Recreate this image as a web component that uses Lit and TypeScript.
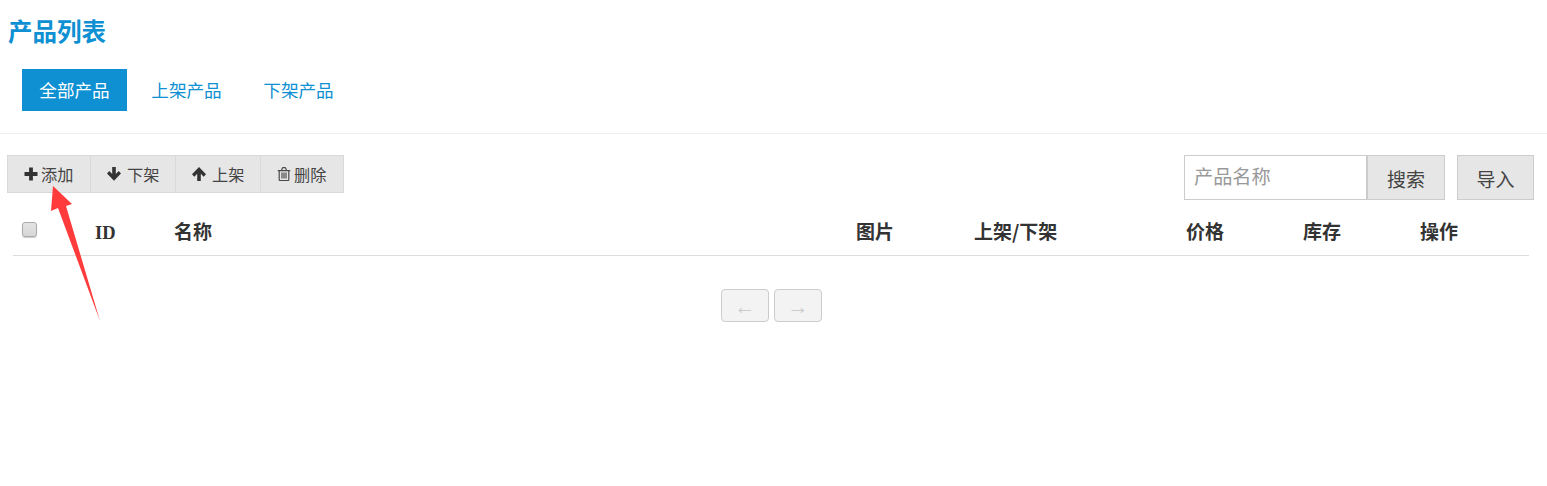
import { LitElement, html, css, svg } from "lit";
import { customElement } from "lit/decorators.js";

const plus = svg`<path d="M5.1 .5h3.8v4.6h4.6v3.8H8.9v4.6H5.1V8.9H.5V5.1h4.6z" fill="currentColor"/>`;
const down = svg`<path d="M5.2 0h3.6v7l2.9-2.9L14 6.5 7 13.8 0 6.5l2.3-2.4L5.2 7z" fill="currentColor"/>`;
const up = svg`<path d="M5.2 14h3.6V6.8l2.9 2.9L14 7.3 7 0 0 7.3l2.3 2.4 2.9-2.9z" fill="currentColor"/>`;
const trash = svg`<path d="M.8 3.6h12.4M2.2 3.6v8.8c0 .8.5 1.2 1.1 1.2h7.4c.6 0 1.1-.4 1.1-1.2V3.6M4.5 3.6l.6-2c.2-.6.6-1 1.2-1h1.4c.6 0 1 .4 1.2 1l.6 2M5 5.6v5.8M7 5.6v5.8M9 5.6v5.8" fill="none" stroke="currentColor" stroke-width="1.2"/>`;

@customElement("app-root")
export class AppRoot extends LitElement {
  static styles = css`
    :host {
      display: block;
      position: relative;
      width: 1547px;
      height: 486px;
      overflow: hidden;
      background: #fff;
      color: #333;
      font-family: "Noto Sans CJK SC", "Liberation Sans", sans-serif;
    }
    .head {
      height: 134px;
      box-sizing: border-box;
      border-bottom: 1px solid #eee;
      padding: 15px 0 0 8px;
    }
    h1 {
      margin: 0;
      height: 32px;
      line-height: 32px;
      font-size: 24.5px;
      font-weight: 700;
      color: #0e90d2;
    }
    .tabs {
      display: flex;
      gap: 7px;
      margin: 22px 0 0 14px;
    }
    .tab {
      width: 105px;
      height: 42px;
      line-height: 41px;
      text-align: center;
      font-size: 17.6px;
      color: #0e90d2;
    }
    .tab.on {
      background: #0e90d2;
      color: #fff;
    }
    .bar {
      display: flex;
      justify-content: space-between;
      align-items: flex-start;
      margin-top: 21px;
      padding: 0 13px 0 7px;
    }
    .group {
      display: flex;
      height: 38px;
      box-sizing: border-box;
      border: 1px solid #d9d9d9;
      background: #e6e6e6;
    }
    .tool {
      box-sizing: border-box;
      display: flex;
      align-items: center;
      padding-left: 16px;
      width: 85px;
      height: 36px;
      border-left: 1px solid #d9d9d9;
      font-size: 16.2px;
      color: #444;
    }
    .tool.first {
      width: 82px;
      border-left: 0;
    }
    .tool.last {
      width: 83px;
    }
    .tool svg {
      flex: none;
      width: 14px;
      height: 14px;
      margin-right: 3px;
      color: #333;
    }
    .tool svg.arr {
      margin-right: 6px;
    }
    .tool svg.t {
      color: #4a4a4a;
    }
    .right {
      display: flex;
    }
    .input {
      box-sizing: border-box;
      width: 183px;
      height: 45px;
      border: 1px solid #ccc;
      padding: 0 9px;
      line-height: 40px;
      font-size: 19.2px;
      color: #999;
    }
    .btn {
      box-sizing: border-box;
      height: 45px;
      border: 1px solid #ccc;
      background: #e6e6e6;
      text-align: center;
      line-height: 45px;
      font-size: 19px;
      color: #444;
    }
    .search {
      width: 78px;
    }
    .import {
      width: 77px;
      margin-left: 12px;
    }
    .thead {
      display: grid;
      grid-template-columns: 82px 79px 682px 118px 212px 117px 117px 1fr;
      align-items: baseline;
      margin: 9px 18px 0 13px;
      height: 47px;
      box-sizing: border-box;
      border-bottom: 1px solid #ddd;
      padding-top: 8px;
      line-height: 28px;
      font-size: 19px;
      font-weight: 700;
      color: #333;
    }
    .thead .id {
      font-family: "Liberation Serif", serif;
      font-size: 18.5px;
    }
    .check {
      box-sizing: border-box;
      align-self: start;
      width: 15px;
      height: 15px;
      margin: 5px 0 0 9px;
      border: 1px solid #aaa;
      border-radius: 3px;
      background: linear-gradient(#e4e4e4, #d6d6d6);
      box-shadow: 0 1px 1px #ccc;
    }
    .pager {
      display: flex;
      justify-content: center;
      gap: 5px;
      margin-top: 33px;
      padding-right: 4px;
    }
    .pg {
      box-sizing: border-box;
      width: 48px;
      height: 33px;
      border: 1px solid #ccc;
      border-radius: 4px;
      background: #f3f3f3;
      color: #ccc;
      text-align: center;
      font-size: 21px;
      line-height: 33px;
      font-family: "Liberation Sans", sans-serif;
    }
    .arrow {
      position: absolute;
      left: 0;
      top: 0;
      pointer-events: none;
    }
  `;

  render() {
    return html`
      <div class="head">
        <h1>产品列表</h1>
        <div class="tabs">
          <div class="tab on">全部产品</div>
          <div class="tab">上架产品</div>
          <div class="tab">下架产品</div>
        </div>
      </div>
      <div class="bar">
        <div class="group">
          <div class="tool first"><svg viewBox="0 0 14 14">${plus}</svg>添加</div>
          <div class="tool"><svg class="arr" viewBox="0 0 14 14">${down}</svg>下架</div>
          <div class="tool"><svg class="arr" viewBox="0 0 14 14">${up}</svg>上架</div>
          <div class="tool last"><svg class="t" viewBox="0 0 14 14">${trash}</svg>删除</div>
        </div>
        <div class="right">
          <div class="input">产品名称</div>
          <div class="btn search">搜索</div>
          <div class="btn import">导入</div>
        </div>
      </div>
      <div class="thead">
        <div class="check"></div>
        <div class="id">ID</div>
        <div>名称</div>
        <div>图片</div>
        <div>上架/下架</div>
        <div>价格</div>
        <div>库存</div>
        <div>操作</div>
      </div>
      <div class="pager">
        <div class="pg">←</div>
        <div class="pg">→</div>
      </div>
      <svg class="arrow" width="1547" height="486" viewBox="0 0 1547 486">
        <path d="M53 186 72 204 66 206 100 321 58 208 51 211z" fill="#ff3b3b"/>
      </svg>
    `;
  }
}
